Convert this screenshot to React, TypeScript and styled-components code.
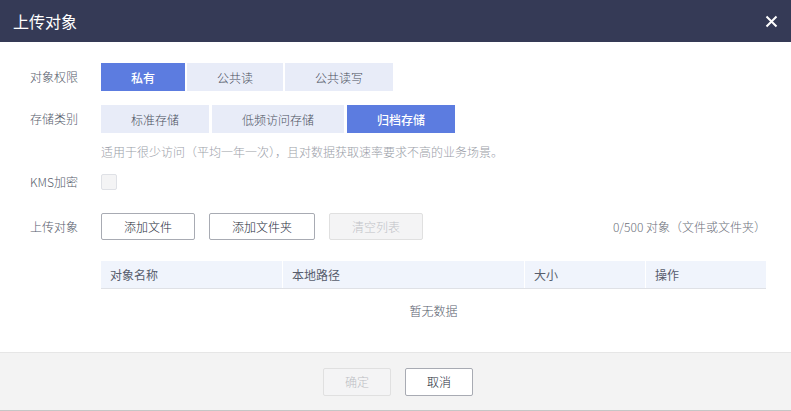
import styled, { createGlobalStyle } from "styled-components";

const GlobalStyle = createGlobalStyle`
    html, body {
        margin: 0;
        padding: 0;
        background: #ffffff;
    }
    body {
        font-family: "Noto Sans CJK SC", "Noto Sans", sans-serif;
        font-size: 12px;
        font-weight: 300;
        color: #575d6c;
    }
`;

const Dialog = styled.div`
    width: 791px;
    height: 411px;
    display: flex;
    flex-direction: column;
    background: #ffffff;
    overflow: hidden;
`;

const Header = styled.div`
    height: 42px;
    flex: none;
    display: flex;
    align-items: center;
    justify-content: space-between;
    padding: 0 13px 0 13px;
    background: #353a56;
`;

const Title = styled.span`
    font-size: 16px;
    font-weight: 400;
    color: #ffffff;
    line-height: 22px;
`;

const CloseBtn = styled.button`
    width: 13px;
    height: 13px;
    padding: 0;
    border: none;
    background: none;
    display: flex;
    cursor: pointer;
`;

const Body = styled.div`
    flex: 1;
    display: flex;
    flex-direction: column;
    padding: 21px 25px 0 30px;
`;

const FormRow = styled.div<{ $mt?: number }>`
    display: flex;
    align-items: center;
    margin-top: ${(p) => p.$mt ?? 0}px;
`;

const Label = styled.span`
    width: 71px;
    flex: none;
    color: #575d6c;
    line-height: 18px;
`;

const Segments = styled.div`
    display: flex;
    gap: 2px;
`;

const Segment = styled.button<{ $active?: boolean; $gap?: number }>`
    height: 28px;
    padding: 0 30px;
    border: none;
    margin-left: ${(p) => p.$gap ?? 0}px;
    font-family: inherit;
    font-size: 12px;
    background: ${(p) => (p.$active ? "#5c7ce0" : "#e8ecf8")};
    color: ${(p) => (p.$active ? "#ffffff" : "#4a505e")};
    font-weight: ${(p) => (p.$active ? 500 : 300)};
    cursor: pointer;
`;

const Hint = styled.div`
    margin: 10px 0 0 71px;
    color: #9a9ea8;
    line-height: 18px;
`;

const Checkbox = styled.span`
    width: 14px;
    height: 14px;
    border: 1px solid #dfe1e6;
    border-radius: 2px;
    background: #f4f4f5;
`;

const ToolButtons = styled.div`
    display: flex;
    gap: 14px;
    flex: 1;
`;

const OutlineButton = styled.button<{ $disabled?: boolean }>`
    height: 27px;
    padding: 0 22px;
    border: 1px solid ${(p) => (p.$disabled ? "#e0e0e0" : "#a8abb3")};
    border-radius: 2px;
    font-family: inherit;
    font-size: 12px;
    font-weight: 300;
    background: ${(p) => (p.$disabled ? "#f4f4f5" : "#ffffff")};
    color: ${(p) => (p.$disabled ? "#c0c2c7" : "#252b3a")};
    cursor: ${(p) => (p.$disabled ? "not-allowed" : "pointer")};
`;

const Counter = styled.span`
    color: #6d717b;
    line-height: 18px;
`;

const Table = styled.div`
    margin: 21px 0 0 71px;
    width: 665px;
`;

const HeadRow = styled.div`
    display: grid;
    grid-template-columns: 182px 242px 121px 120px;
    height: 27px;
    background: #f0f4fc;
    border-bottom: 1px solid #dfe1e6;
`;

const HeadCell = styled.div<{ $last?: boolean }>`
    display: flex;
    align-items: center;
    padding-left: 9px;
    color: #575d6c;
    font-weight: 400;
    border-right: ${(p) => (p.$last ? "none" : "1px solid #ffffff")};
`;

const Empty = styled.div`
    height: 42px;
    display: flex;
    align-items: center;
    justify-content: center;
    color: #575d6c;
`;

const Footer = styled.div`
    height: 59px;
    flex: none;
    display: flex;
    align-items: center;
    justify-content: center;
    gap: 14px;
    padding-left: 5px;
    background: #f3f3f3;
    border-top: 1px solid #e6e6e6;
    border-bottom: 1px solid #c6c6c6;
    box-sizing: border-box;
`;

const FooterButton = styled.button<{ $disabled?: boolean }>`
    width: 68px;
    height: 28px;
    border: 1px solid ${(p) => (p.$disabled ? "#e0e0e0" : "#a8abb3")};
    border-radius: 2px;
    font-family: inherit;
    font-size: 12px;
    font-weight: 300;
    background: ${(p) => (p.$disabled ? "#f4f4f5" : "#ffffff")};
    color: ${(p) => (p.$disabled ? "#bcbec4" : "#252b3a")};
    cursor: ${(p) => (p.$disabled ? "not-allowed" : "pointer")};
`;

const columns = ["对象名称", "本地路径", "大小", "操作"];

export default function App() {
    return (
        <>
            <GlobalStyle />
            <Dialog>
                <Header>
                    <Title>上传对象</Title>
                    <CloseBtn aria-label="关闭">
                        <svg width="13" height="13" viewBox="0 0 13 13">
                            <path
                                d="M1.5 1.5 L11.5 11.5 M11.5 1.5 L1.5 11.5"
                                stroke="#ffffff"
                                strokeWidth="2"
                            />
                        </svg>
                    </CloseBtn>
                </Header>
                <Body>
                    <FormRow>
                        <Label>对象权限</Label>
                        <Segments>
                            <Segment $active>私有</Segment>
                            <Segment>公共读</Segment>
                            <Segment>公共读写</Segment>
                        </Segments>
                    </FormRow>
                    <FormRow $mt={14}>
                        <Label>存储类别</Label>
                        <Segments>
                            <Segment>标准存储</Segment>
                            <Segment $gap={1}>低频访问存储</Segment>
                            <Segment $gap={1} $active>
                                归档存储
                            </Segment>
                        </Segments>
                    </FormRow>
                    <Hint>适用于很少访问（平均一年一次），且对数据获取速率要求不高的业务场景。</Hint>
                    <FormRow $mt={12}>
                        <Label>KMS加密</Label>
                        <Checkbox />
                    </FormRow>
                    <FormRow $mt={22}>
                        <Label>上传对象</Label>
                        <ToolButtons>
                            <OutlineButton>添加文件</OutlineButton>
                            <OutlineButton>添加文件夹</OutlineButton>
                            <OutlineButton $disabled>清空列表</OutlineButton>
                        </ToolButtons>
                        <Counter>0/500 对象（文件或文件夹）</Counter>
                    </FormRow>
                    <Table>
                        <HeadRow>
                            {columns.map((c, i) => (
                                <HeadCell key={c} $last={i === columns.length - 1}>
                                    {c}
                                </HeadCell>
                            ))}
                        </HeadRow>
                        <Empty>暂无数据</Empty>
                    </Table>
                </Body>
                <Footer>
                    <FooterButton $disabled>确定</FooterButton>
                    <FooterButton>取消</FooterButton>
                </Footer>
            </Dialog>
        </>
    );
}
